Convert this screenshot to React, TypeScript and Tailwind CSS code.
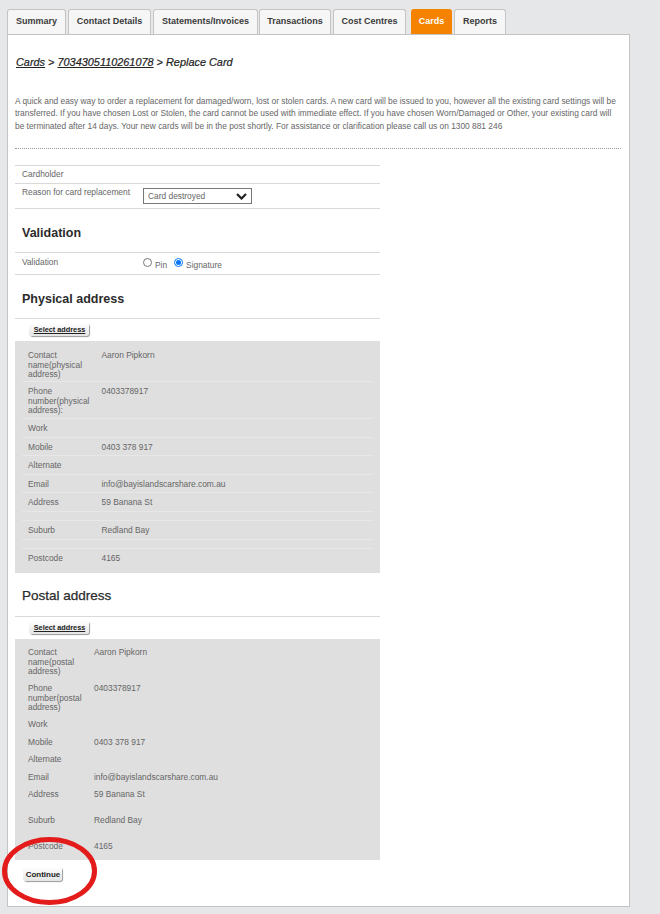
import React from "react";

const tabs = [
  { t: "Summary", w: "w-[59px]" },
  { t: "Contact Details", w: "w-[83px]" },
  { t: "Statements/Invoices", w: "w-[105px]" },
  { t: "Transactions", w: "w-[72px] -ml-[1px]" },
  { t: "Cost Centres", w: "w-[73px]" },
  { t: "Cards", w: "w-[41px] ml-[3px]", on: true },
  { t: "Reports", w: "w-[52px]" },
];

type Row = { l: React.ReactNode; v?: string; h: string; pt?: string };

const physical: Row[] = [
  { l: <>Contact<br />name(physical<br />address)</>, v: "Aaron Pipkorn", h: "h-[41px]", pt: "pt-[10px]" },
  { l: <>Phone<br />number(physical<br />address):</>, v: "0403378917", h: "h-[37px]" },
  { l: "Work", h: "h-[19px]" },
  { l: "Mobile", v: "0403 378 917", h: "h-[18px]" },
  { l: "Alternate", h: "h-[19px]" },
  { l: "Email", v: "info@bayislandscarshare.com.au", h: "h-[18px]" },
  { l: "Address", v: "59 Banana St", h: "h-[19px]" },
  { l: "", h: "h-[9px]", pt: "pt-0" },
  { l: "Suburb", v: "Redland Bay", h: "h-[19px]" },
  { l: "", h: "h-[9px]", pt: "pt-0" },
  { l: "Postcode", v: "4165", h: "h-[24px]" },
];

const postal: Row[] = [
  { l: <>Contact<br />name(postal<br />address)</>, v: "Aaron Pipkorn", h: "h-[36px]" },
  { l: <>Phone<br />number(postal<br />address)</>, v: "0403378917", h: "h-[36px]" },
  { l: "Work", h: "h-[18px]" },
  { l: "Mobile", v: "0403 378 917", h: "h-[17px]" },
  { l: "Alternate", h: "h-[18px]" },
  { l: "Email", v: "info@bayislandscarshare.com.au", h: "h-[17px]" },
  { l: "Address", v: "59 Banana St", h: "h-[26px]" },
  { l: "Suburb", v: "Redland Bay", h: "h-[26px]" },
  { l: "Postcode", v: "4165", h: "h-[19px]" },
];

function Sheet({ rows, lines, labelW, top, rowPt }: { rows: Row[]; lines: boolean; labelW: string; top: string; rowPt: string }) {
  return (
    <div className={`w-[365px] bg-[#dfdfdf] px-[7px] ${top}`}>
      {rows.map((r, i) => (
        <div
          key={i}
          className={`flex ${r.h} ${r.pt ?? rowPt} pl-[6px] text-[8.4px] leading-[9.3px] text-[#666] ${
            lines && i < rows.length - 1 ? "border-b border-[#e7e7e7]" : ""
          }`}
        >
          <div className={`${labelW} shrink-0`}>{r.l}</div>
          <div>{r.v}</div>
        </div>
      ))}
    </div>
  );
}

function SelectBtn() {
  return (
    <div className="flex h-[22px] w-[365px] items-start pt-[4px] pl-[14px]">
      <button className="h-[13px] w-[60px] rounded-[3px] bg-gradient-to-b from-white to-[#e4e4e4] pl-[1px] text-[7.3px] leading-[13px] font-bold text-[#222] underline shadow-[1px_1px_1px_#999]">
        Select address
      </button>
    </div>
  );
}

function Heading({ t, cls }: { t: string; cls: string }) {
  return <div className={`flex w-[365px] items-center border-b border-[#d9d9d9] pl-[7px] text-[#2b2b2b] ${cls}`}>{t}</div>;
}

export default function App() {
  return (
    <div className="relative h-[914px] w-[660px] overflow-hidden bg-[#e6e7e8] pt-[9px] pl-[7px] font-['Liberation_Sans',Arial,sans-serif]">
      <div className="flex h-[25px] gap-[2px]">
        {tabs.map((x) => (
          <div
            key={x.t}
            className={`flex ${x.w} items-center justify-center rounded-t-[3px] border border-b-0 text-[9px] font-bold ${
              x.on ? "border-[#f58300] bg-[#f58300] text-white" : "border-[#c4c4c4] bg-[#f6f6f6] text-[#3a3a3a]"
            }`}
          >
            {x.t}
          </div>
        ))}
      </div>

      <div className="h-[873px] w-[623px] border border-[#c4c4c4] bg-white pl-[7px]">
        <h1 className="pt-[20px] pl-[1px] text-[10.9px] leading-[14px] font-normal text-[#222] italic [-webkit-text-stroke:0.2px_#222]">
          <span className="underline">Cards</span> &gt; <span className="underline">7034305110261078</span> &gt; Replace Card
        </h1>

        <p className="mt-[26px] w-[606px] border-b border-dotted border-[#999] pb-[16px] text-[8.37px] leading-[12.4px] text-[#666]">
          A quick and easy way to order a replacement for damaged/worn, lost or stolen cards. A new card will be issued to you, however all the existing card settings will be transferred. If you have chosen Lost or Stolen, the card cannot be used with immediate effect. If you have chosen Worn/Damaged or Other, your existing card will be terminated after 14 days. Your new cards will be in the post shortly. For assistance or clarification please call us on 1300 881 246
        </p>

        <div className="mt-[16px] w-[365px] border-t border-[#d9d9d9] text-[8.4px] text-[#666]">
          <div className="flex h-[18px] items-center border-b border-[#d9d9d9] pl-[7px]">Cardholder</div>
          <div className="flex h-[25px] border-b border-[#d9d9d9] pl-[7px]">
            <div className="w-[121px] pt-[2px]">Reason for card replacement</div>
            <div className="mt-[4px] flex h-[16px] w-[109px] items-center justify-between border border-[#777] pr-[4px] pl-[4px]">
              <span>Card destroyed</span>
              <svg width="11" height="7" viewBox="0 0 11 7" fill="none" stroke="#222" strokeWidth="2.2">
                <path d="M1 1l4.5 4.5L10 1" />
              </svg>
            </div>
          </div>
        </div>

        <Heading t="Validation" cls="h-[44px] pt-[6px] text-[12.5px] font-bold" />
        <div className="flex h-[22px] w-[365px] border-b border-[#d9d9d9] pl-[7px] text-[8.4px] text-[#666]">
          <div className="w-[121px] pt-[3px]">Validation</div>
          <div className="flex items-start pt-[3px]">
            <span className="mt-[2px] h-[9px] w-[9px] rounded-full border border-[#777] bg-white" />
            <span className="mt-[3px] ml-[3px]">Pin</span>
            <span className="mt-[2px] ml-[7px] flex h-[9px] w-[9px] items-center justify-center rounded-full border border-[#0075ff] bg-white">
              <span className="h-[5px] w-[5px] rounded-full bg-[#0075ff]" />
            </span>
            <span className="mt-[3px] ml-[3px]">Signature</span>
          </div>
        </div>

        <Heading t="Physical address" cls="h-[44px] pt-[6px] text-[12.5px] font-bold" />
        <SelectBtn />
        <Sheet rows={physical} lines labelW="w-[73.5px]" top="" rowPt="pt-[5px]" />

        <Heading t="Postal address" cls="h-[44px] pt-[2px] text-[13.5px] font-normal [-webkit-text-stroke:0.25px_#2b2b2b]" />
        <SelectBtn />
        <Sheet rows={postal} lines={false} labelW="w-[66px]" top="pt-[8px]" rowPt="pt-[1px]" />

        <div className="pt-[7px] pl-[8px]">
          <button className="block h-[14px] w-[39px] rounded-[3px] bg-gradient-to-b from-white to-[#e4e4e4] pl-[1px] text-[8px] leading-[13px] font-bold text-[#222] shadow-[1px_1px_1px_#999]">
            Continue
          </button>
        </div>
      </div>

      <svg className="absolute top-[836px] left-0" width="100" height="72" viewBox="0 0 100 72" fill="none">
        <ellipse cx="49.5" cy="35" rx="45" ry="31.5" stroke="#e31b1b" strokeWidth="5" />
      </svg>
    </div>
  );
}
